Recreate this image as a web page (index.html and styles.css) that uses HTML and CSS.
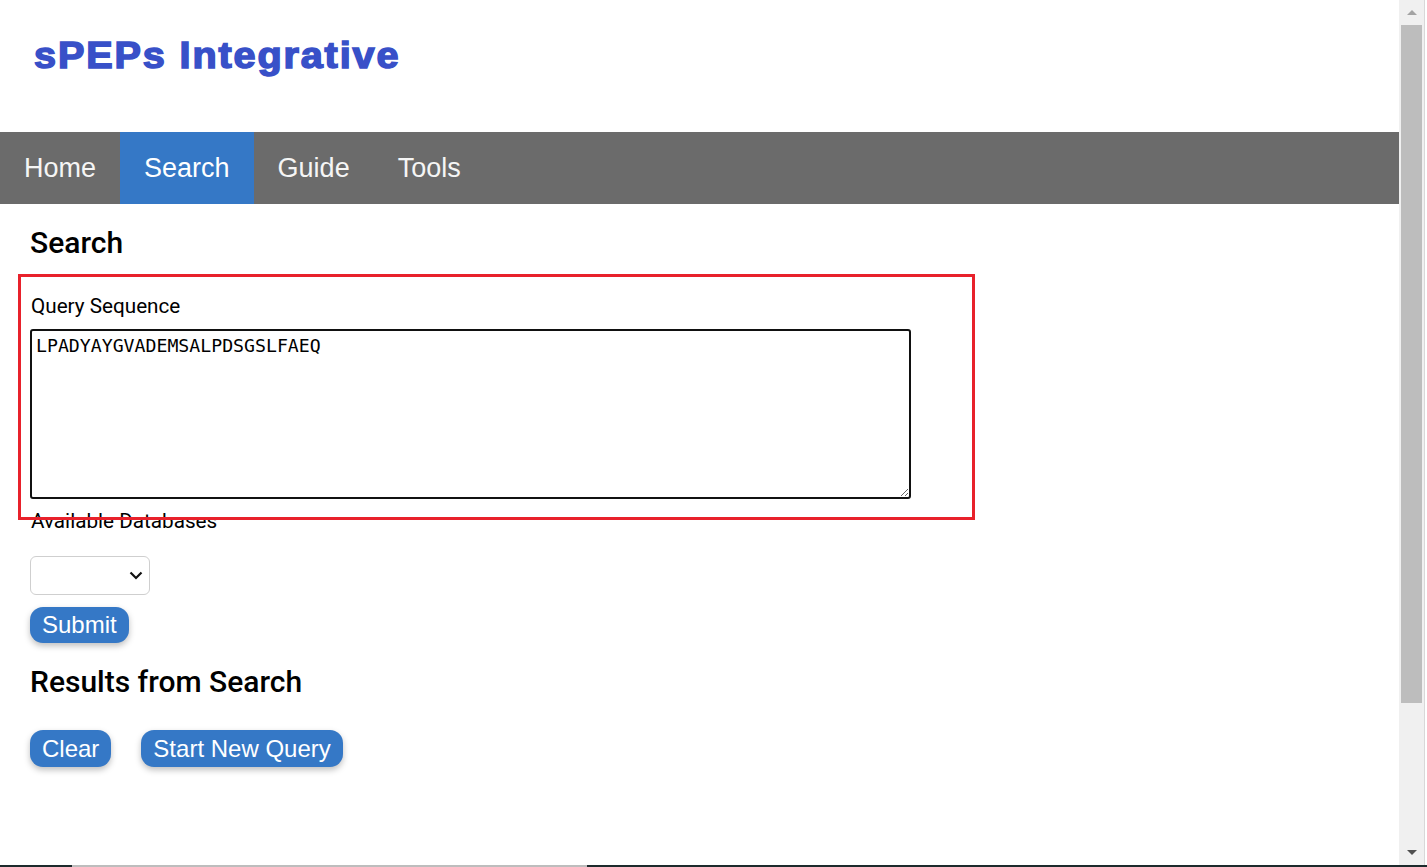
FILE: index.html
```html
<!DOCTYPE html>
<html lang="en">
<head>
<meta charset="utf-8">
<title>sPEPs Integrative - Search</title>
<link rel="stylesheet" href="styles.css">
</head>
<body>
<div class="window">
  <div class="page">
    <header class="masthead">
      <h1 class="brand">sPEPs Integrative</h1>
    </header>
    <nav class="navbar">
      <a class="nav-link" href="#">Home</a>
      <a class="nav-link active" href="#">Search</a>
      <a class="nav-link" href="#">Guide</a>
      <a class="nav-link" href="#">Tools</a>
    </nav>
    <main class="content">
      <h2 class="section-title">Search</h2>
      <form class="search-form">
        <div class="query-group">
          <label class="field-label" for="seq">Query Sequence</label>
          <textarea id="seq" class="seq-input">LPADYAYGVADEMSALPDSGSLFAEQ</textarea>
          <span class="highlight"></span>
        </div>
        <label class="field-label db-label" for="db">Available Databases</label>
        <div class="select-wrap">
          <select id="db" class="db-select"></select>
          <svg class="select-chevron" width="14" height="9" viewBox="0 0 14 9" aria-hidden="true">
            <path d="M1.5 1.5 L7 7 L12.5 1.5" fill="none" stroke="#111" stroke-width="2.2"/>
          </svg>
        </div>
        <button type="button" class="btn submit-btn">Submit</button>
      </form>
      <h2 class="section-title results-title">Results from Search</h2>
      <div class="actions">
        <button type="button" class="btn">Clear</button>
        <button type="button" class="btn">Start New Query</button>
      </div>
    </main>
  </div>
  <div class="scrollbar">
    <div class="sb-track">
      <span class="sb-arrow up"></span>
      <div class="sb-thumb"></div>
      <div class="sb-fill"></div>
      <span class="sb-arrow down"></span>
    </div>
    <div class="sb-edge"></div>
  </div>
</div>
<div class="bottom-line">
  <span class="bl-dark bl-a"></span><span class="bl-gray"></span><span class="bl-dark bl-b"></span>
</div>
</body>
</html>
```

FILE: styles.css
```css
html, body {
  margin: 0;
  padding: 0;
  background: #ffffff;
  height: 100%;
  overflow: hidden;
}
body {
  font-family: Roboto, "Liberation Sans", Arial, sans-serif;
  color: #000;
}
.window {
  display: flex;
  height: 865px;
}
.page {
  flex: 1;
  min-width: 0;
}
.masthead {
  height: 132px;
  box-sizing: border-box;
  padding: 35px 0 0 34px;
}
.brand {
  display: inline-block;
  margin: 0;
  font-family: "Liberation Sans", Arial, sans-serif;
  font-weight: 700;
  font-size: 36px;
  line-height: 42px;
  letter-spacing: 1.7px;
  color: #3850c8;
  -webkit-text-stroke: 1.5px #3850c8;
  transform: scaleX(1.1);
  transform-origin: left center;
  white-space: nowrap;
}
.navbar {
  display: flex;
  height: 72px;
  background: #6b6b6b;
}
.nav-link {
  display: flex;
  align-items: center;
  padding: 0 24px;
  font-family: "Liberation Sans", Arial, sans-serif;
  font-size: 27px;
  color: #f5f5f5;
  text-decoration: none;
}
.nav-link.active {
  background: #3578c6;
  color: #fff;
}
.content {
  position: relative;
  padding: 0 0 0 30px;
}
.section-title {
  margin: 0;
  font-weight: 500;
  font-size: 30px;
  line-height: 34px;
  padding-top: 22px;
}
.search-form {
  display: flex;
  flex-direction: column;
  align-items: flex-start;
}
.query-group {
  position: relative;
  display: flex;
  flex-direction: column;
  align-items: flex-start;
  padding-top: 34px;
}
.field-label {
  font-size: 20.7px;
  line-height: 24px;
  margin-left: 1px;
}
.seq-input {
  margin-top: 11px;
  width: 881px;
  height: 170px;
  box-sizing: border-box;
  border: 2px solid #111;
  border-radius: 3px;
  padding: 4px 4px;
  font-family: "DejaVu Sans Mono", "Liberation Mono", monospace;
  font-size: 18.2px;
  line-height: 22px;
  color: #000;
  resize: both;
  background: #fff;
}
.highlight {
  position: absolute;
  left: -12px;
  top: 14px;
  width: 957px;
  height: 246px;
  box-sizing: border-box;
  border: 3px solid #e8212b;
  pointer-events: none;
}
.db-label {
  margin-top: 10px;
}
.select-wrap {
  position: relative;
  margin-top: 23px;
  display: flex;
}
.db-select {
  width: 120px;
  height: 39px;
  border: 1px solid #cfcfcf;
  border-radius: 6px;
  background: #fff;
  font-size: 16px;
  appearance: none;
  -webkit-appearance: none;
}
.select-chevron {
  position: absolute;
  left: 99px;
  top: 15px;
  pointer-events: none;
}
.btn {
  font-family: "Liberation Sans", Arial, sans-serif;
  font-size: 24px;
  line-height: 36px;
  height: 36px;
  padding: 0 12px;
  border: none;
  border-radius: 13px;
  background: #3578c6;
  color: #fff;
  box-shadow: 0 3px 6px rgba(0, 0, 0, 0.25);
}
.submit-btn {
  margin-top: 12px;
}
.results-title {
  padding-top: 22px;
}
.actions {
  display: flex;
  gap: 30px;
  padding-top: 31px;
}
.actions .btn {
  height: 37px;
}
.scrollbar {
  width: 28px;
  display: flex;
  flex-shrink: 0;
}
.sb-track {
  width: 25px;
  background: #f0f0f0;
  display: flex;
  flex-direction: column;
  align-items: center;
}
.sb-arrow {
  width: 0;
  height: 0;
  border-left: 5px solid transparent;
  border-right: 5px solid transparent;
}
.sb-arrow.up {
  border-bottom: 5px solid #a3a3a3;
  margin-top: 10px;
  margin-bottom: 10px;
}
.sb-arrow.down {
  border-top: 5px solid #505050;
  margin-bottom: 10px;
}
.sb-thumb {
  width: 21px;
  height: 678px;
  background: #bdbdbd;
}
.sb-fill {
  flex: 1;
}
.sb-edge {
  width: 3px;
  background: #fff;
  border-left: 1px solid #d8d8d8;
  box-sizing: border-box;
}
.bottom-line {
  display: flex;
  height: 2px;
}
.bl-dark {
  background: #1d2a2c;
}
.bl-a {
  width: 72px;
}
.bl-gray {
  width: 515px;
  background: #bdbdbd;
}
.bl-b {
  flex: 1;
}
```
